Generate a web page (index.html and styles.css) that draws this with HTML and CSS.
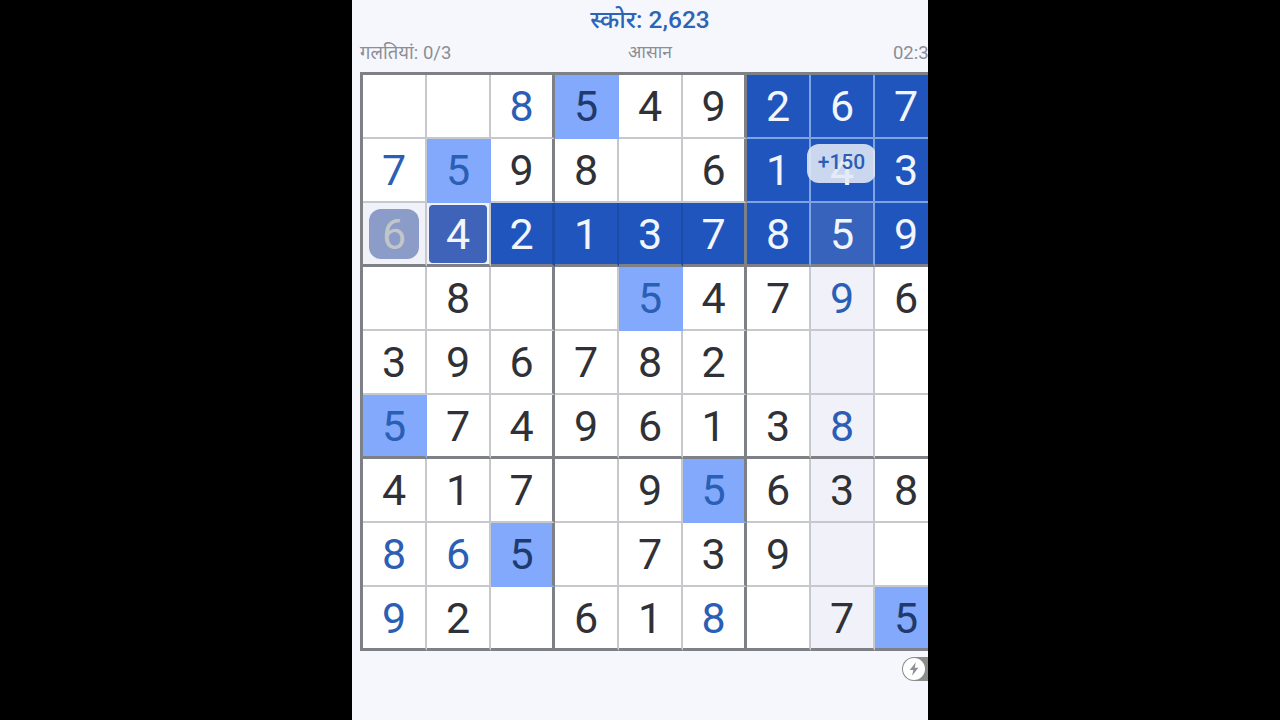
FILE: index.html
```html
<!DOCTYPE html>
<html lang="hi">
<head>
  <meta charset="UTF-8">
  <title>सुडोकू</title>
  <link rel="stylesheet" href="styles.css">
</head>
<body>

  <div class="phone">
    <div class="game">
      <div class="score">स्कोर: 2,623</div>

      <div class="meta">
        <div class="mistakes">गलतियां: 0/3</div>
        <div class="level">आसान</div>
        <div class="timer">02:34</div>
      </div>

      <div class="board">
        <div class="cell"></div><div class="cell"></div><div class="cell given">8</div><div class="cell same">5</div><div class="cell">4</div><div class="cell">9</div><div class="cell blue">2</div><div class="cell blue">6</div><div class="cell blue">7</div>
        <div class="cell given">7</div><div class="cell same given">5</div><div class="cell">9</div><div class="cell">8</div><div class="cell"></div><div class="cell">6</div><div class="cell blue">1</div><div class="cell blue">4<div class="points">+150</div></div><div class="cell blue">3</div>
        <div class="cell tint"><span class="ghost">6</span></div><div class="cell tint"><span class="picked">4</span></div><div class="cell blue seam">2</div><div class="cell blue seam">1</div><div class="cell blue seam">3</div><div class="cell blue">7</div><div class="cell blue">8</div><div class="cell blue mid">5</div><div class="cell blue">9</div>
        <div class="cell"></div><div class="cell">8</div><div class="cell"></div><div class="cell"></div><div class="cell same given">5</div><div class="cell">4</div><div class="cell">7</div><div class="cell tint given">9</div><div class="cell">6</div>
        <div class="cell">3</div><div class="cell">9</div><div class="cell">6</div><div class="cell">7</div><div class="cell">8</div><div class="cell">2</div><div class="cell"></div><div class="cell tint"></div><div class="cell"></div>
        <div class="cell same given">5</div><div class="cell">7</div><div class="cell">4</div><div class="cell">9</div><div class="cell">6</div><div class="cell">1</div><div class="cell">3</div><div class="cell tint given">8</div><div class="cell"></div>
        <div class="cell">4</div><div class="cell">1</div><div class="cell">7</div><div class="cell"></div><div class="cell">9</div><div class="cell same given">5</div><div class="cell">6</div><div class="cell tint">3</div><div class="cell">8</div>
        <div class="cell given">8</div><div class="cell given">6</div><div class="cell same">5</div><div class="cell"></div><div class="cell">7</div><div class="cell">3</div><div class="cell">9</div><div class="cell tint"></div><div class="cell"></div>
        <div class="cell given">9</div><div class="cell">2</div><div class="cell"></div><div class="cell">6</div><div class="cell">1</div><div class="cell given">8</div><div class="cell"></div><div class="cell tint">7</div><div class="cell same">5</div>
      </div>

      <div class="footer">
        <div class="boost">
          <div class="boost-dot">
            <svg width="16" height="16" viewBox="0 0 14 14"><path d="M8.6 1 3.2 7.9h3.2L5.4 13l5.4-7H7.6z" fill="#8d9096"/></svg>
          </div>
        </div>
      </div>
    </div>
  </div>

</body>
</html>
```

FILE: styles.css
```css
body {
  margin: 0;
  background: #000;
  font-family: 'Roboto', 'Noto Sans', sans-serif;
}

.phone {
  width: 576px;
  height: 720px;
  margin: 0 auto;
  background: #f6f7fd;
  overflow: hidden;
}

.game {
  width: 580px;
  margin-left: 8px;
}

.score {
  padding-top: 5px;
  height: 31px;
  line-height: 30px;
  text-align: center;
  font-size: 24.5px;
  font-weight: 500;
  color: #2e64b6;
}

.meta {
  display: grid;
  grid-template-columns: 1fr auto 1fr;
  height: 36px;
  line-height: 35px;
  font-size: 18.5px;
  color: #8b8e94;
}

.level {
  font-size: 17.5px;
  line-height: 33px;
}

.timer {
  text-align: right;
  padding-right: 1px;
}

.board {
  display: grid;
  grid-template-columns: repeat(9, 64px);
  grid-auto-rows: 64px;
  border-top: 3px solid #7d8186;
  border-left: 3px solid #7d8186;
}

.cell {
  position: relative;
  display: flex;
  align-items: center;
  justify-content: center;
  box-sizing: border-box;
  background: #fff;
  border-right: 2px solid #c6c8cc;
  border-bottom: 2px solid #c6c8cc;
  font-size: 43px;
  color: #2f3137;
}

/* thick lines between the 3x3 boxes */
.cell:nth-child(9n+3),
.cell:nth-child(9n+6) {
  border-right: 3px solid #7d8186;
}

.cell:nth-child(n+19):nth-child(-n+27),
.cell:nth-child(n+46):nth-child(-n+54),
.cell:nth-child(n+73) {
  border-bottom: 3px solid #7d8186;
}

.given {
  color: #2a5fb5;
}

.same {
  background: #82a9fb;
  color: #1f3a6e;
  border-right-color: transparent;
  border-bottom-color: transparent;
}

.same.given {
  color: #2a5fb5;
}

.tint {
  background: #f0f1f9;
}

.blue {
  background: #1f55bd;
  color: #f2f5fb;
  border-right-color: #7fa4e6;
  border-bottom-color: #7fa4e6;
}

.cell.seam {
  border-right-color: #1b4ca8;
}

.mid {
  background: #3763bd;
}

.ghost {
  display: flex;
  align-items: center;
  justify-content: center;
  width: 50px;
  height: 50px;
  border-radius: 12px;
  background: #8b9cc8;
  color: #c3c6c9;
}

.picked {
  display: flex;
  align-items: center;
  justify-content: center;
  width: 58px;
  height: 58px;
  border-radius: 4px;
  background: #3e63b8;
  color: #f2f5fb;
}

.points {
  position: absolute;
  top: 5px;
  left: -4px;
  width: 69px;
  height: 39px;
  line-height: 37px;
  text-align: center;
  border-radius: 12px;
  background: rgba(228, 233, 246, 0.88);
  font-size: 21px;
  font-weight: 500;
  color: #2a5fb5;
}

.footer {
  display: flex;
  justify-content: flex-end;
  padding-top: 6px;
}

.boost {
  width: 38px;
  height: 24px;
  padding: 1px;
  box-sizing: border-box;
  border-radius: 12px;
  background: #8c8c8c;
}

.boost-dot {
  display: flex;
  align-items: center;
  justify-content: center;
  width: 22px;
  height: 22px;
  border-radius: 50%;
  background: #fff;
}
```
